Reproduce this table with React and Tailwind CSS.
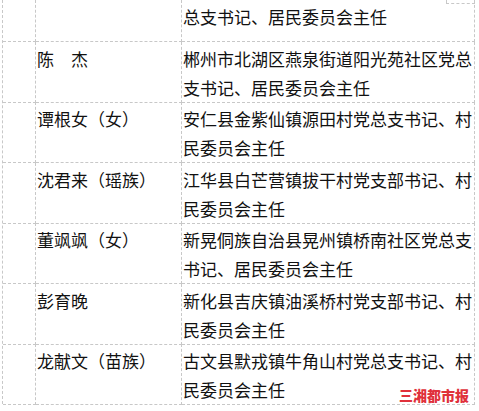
import React from "react";

const rows = [
  { name: "", lines: ["总支书记、居民委员会主任"], h: "h-[42px]" },
  { name: "陈　杰", lines: ["郴州市北湖区燕泉街道阳光苑社区党总", "支书记、居民委员会主任"], h: "h-[60px]" },
  { name: "谭根女（女）", lines: ["安仁县金紫仙镇源田村党总支书记、村", "民委员会主任"], h: "h-[61px]" },
  { name: "沈君来（瑶族）", lines: ["江华县白芒营镇拔干村党支部书记、村", "民委员会主任"], h: "h-[60px]" },
  { name: "董飒飒（女）", lines: ["新晃侗族自治县晃州镇桥南社区党总支", "书记、居民委员会主任"], h: "h-[61px]" },
  { name: "彭育晚", lines: ["新化县吉庆镇油溪桥村党支部书记、村", "民委员会主任"], h: "h-[60px]" },
  { name: "龙献文（苗族）", lines: ["古文县默戎镇牛角山村党总支书记、村", "民委员会主任"], h: "h-[60px]" },
];

const cell = "border-r border-b border-dashed border-[#c8c8c8]";

export default function App() {
  return (
    <div className="relative w-[479px] h-[411px] bg-white overflow-hidden text-[17px] leading-[29px] text-[#111]" style={{ fontFamily: '"Noto Sans CJK SC", "Noto Sans", sans-serif' }}>
      <div className="ml-[2px] w-[473px] border-l border-dashed border-[#c8c8c8]">
        {rows.map((r, i) => (
          <div key={i} className={`grid grid-cols-[33px_146px_293px] ${r.h}`}>
            <div className={cell}></div>
            <div className={`${cell} pl-px pt-[2px] whitespace-nowrap`}>{r.name}</div>
            <div className={`${cell} pl-px pt-[2px]`}>
              {r.lines.map((l, j) => (
                <div key={j} className="whitespace-nowrap">{l}</div>
              ))}
            </div>
          </div>
        ))}
      </div>
      <div className="absolute left-[446px] top-0 w-[29px] h-[4px] border-l border-b border-dashed border-[#c8c8c8]"></div>
      <div className="absolute left-[399px] top-[388px] text-[14px] leading-[15px] font-black tracking-[0px] text-[#e0313b]">三湘都市报</div>
    </div>
  );
}
